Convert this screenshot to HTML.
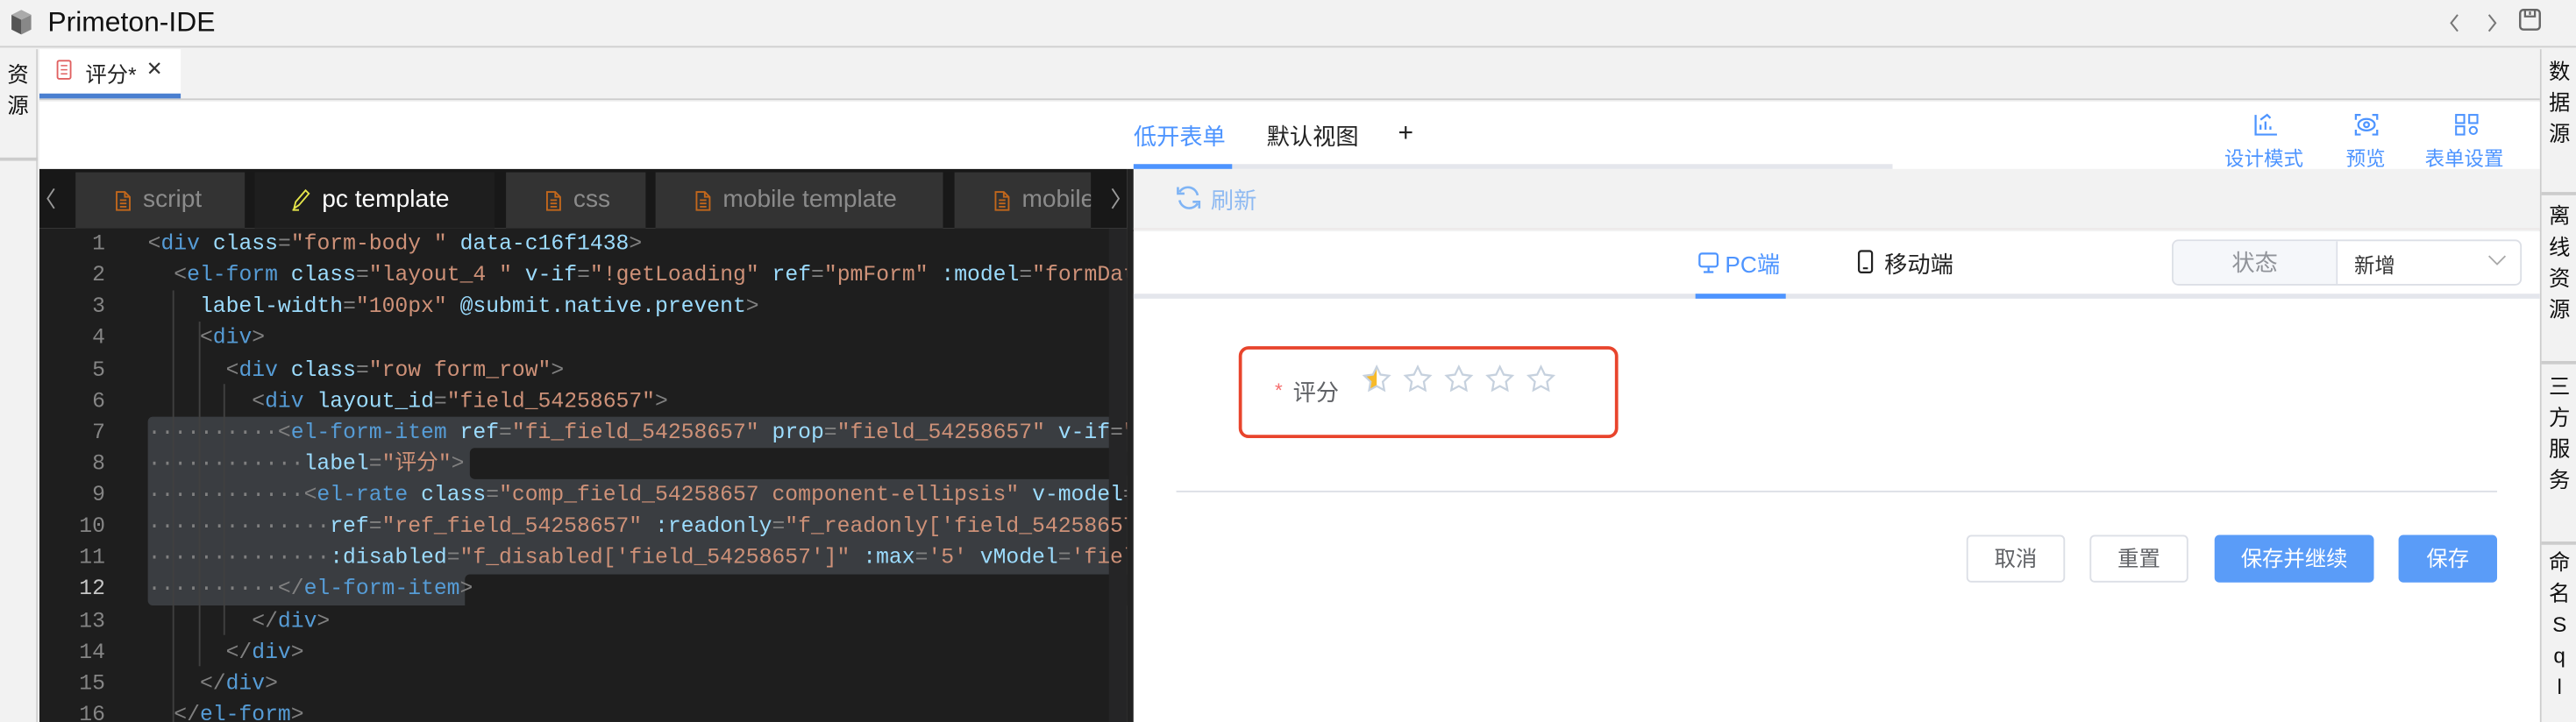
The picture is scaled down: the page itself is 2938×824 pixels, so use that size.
<!DOCTYPE html>
<html><head><meta charset="utf-8"><style>
*{margin:0;padding:0;box-sizing:border-box}
html,body{width:2938px;height:824px;overflow:hidden;background:#f2f2f2}
#w{position:absolute;left:0;top:0;width:1568px;height:440px;transform:scale(1.8737,1.8727);transform-origin:0 0;font-family:"Liberation Sans","Noto Sans CJK SC",sans-serif;color:#222}
.a{position:absolute}
.code{position:absolute;left:24px;top:139px;width:662px;height:301px;background:#1e1e1e;overflow:hidden}
.ln{position:absolute;left:0;width:40px;text-align:right;font-family:"Liberation Mono",monospace;font-size:13.2px;color:#858585;height:19.13px;line-height:19.13px}
.cl{position:absolute;left:66px;white-space:pre;font-family:"Liberation Mono","Noto Sans CJK SC",monospace;font-size:13.2px;height:19.13px;line-height:19.13px;color:#d4d4d4}
.t{color:#569cd6}.p{color:#808080}.at{color:#9cdcfe}.s{color:#ce9178}
.tab{position:absolute;top:105px;height:34px;background:#333;color:#8b8b8b;font-size:15px;line-height:34px;overflow:hidden;white-space:nowrap}
.tab svg{position:absolute;left:24px;top:11px}
.tab span{position:absolute;left:41px;top:0}
.btn{position:absolute;top:326px;height:29px;border-radius:3px;font-size:13px;line-height:27px;text-align:center}
.vs{position:absolute;width:22px;text-align:center;font-size:13px;line-height:19px;color:#111}
</style></head><body><div id="w">
<div class="a" style="left:0;top:0;width:1568px;height:29px;background:#f2f2f2;border-bottom:1.5px solid #cfcfcf"></div>
<svg class="a" style="left:5px;top:5px" width="17" height="17" viewBox="0 0 17 17"><path d="M2 4l6 3v9l-6-3z" fill="#555"/><path d="M8 7l6-3v9l-6 3z" fill="#888"/><path d="M2 4l6-3 6 3-6 3z" fill="#aaa"/></svg>
<div class="a" style="left:29px;top:4px;font-size:17px;color:#111">Primeton-IDE</div>
<svg class="a" style="left:1489px;top:7px" width="10" height="14" viewBox="0 0 10 14"><path d="M7 2L3 7l4 5" fill="none" stroke="#777" stroke-width="1.1"/></svg>
<svg class="a" style="left:1512px;top:7px" width="10" height="14" viewBox="0 0 10 14"><path d="M3 2l4 5-4 5" fill="none" stroke="#777" stroke-width="1.1"/></svg>
<svg class="a" style="left:1533px;top:5px" width="14" height="14" viewBox="0 0 14 14"><rect x="1" y="1" width="12" height="12" rx="2" fill="none" stroke="#666" stroke-width="1.3"/><path d="M4 1v4h6V1M7 2v2" fill="none" stroke="#666" stroke-width="1.2"/></svg>
<div class="a" style="left:0;top:30px;width:23px;height:410px;background:#f2f2f2;border-right:1px solid #d0d0d0"></div>
<div class="vs" style="left:0;top:36px">资<br>源</div>
<div class="a" style="left:0;top:96px;width:23px;height:1.5px;background:#ccc"></div>
<div class="a" style="left:1546px;top:30px;width:22px;height:410px;background:#f2f2f2;border-left:1px solid #ccc"></div>
<div class="vs" style="left:1547px;top:34px">数<br>据<br>源</div>
<div class="a" style="left:1547px;top:117px;width:21px;height:1.5px;background:#ccc"></div>
<div class="vs" style="left:1547px;top:122px">离<br>线<br>资<br>源</div>
<div class="a" style="left:1547px;top:220px;width:21px;height:1.5px;background:#ccc"></div>
<div class="vs" style="left:1547px;top:226px">三<br>方<br>服<br>务</div>
<div class="a" style="left:1547px;top:330px;width:21px;height:1.5px;background:#ccc"></div>
<div class="vs" style="left:1547px;top:333px">命<br>名<br>S<br>q<br>l</div>
<div class="a" style="left:24px;top:30px;width:1522px;height:31px;background:#f2f2f2;border-bottom:1.5px solid #ccc"></div>
<div class="a" style="left:24px;top:30px;width:86px;height:30px;background:#fff;border-bottom:3px solid #4a7fd0"></div>
<svg class="a" style="left:34px;top:36px" width="10" height="13" viewBox="0 0 10 13"><rect x="1" y="1" width="8" height="11" rx="1" fill="none" stroke="#e06060" stroke-width="1"/><path d="M3 4h4M3 6.5h4M3 9h4" stroke="#e06060" stroke-width=".8"/></svg>
<div class="a" style="left:52px;top:35px;font-size:13px;color:#222">评分*</div>
<div class="a" style="left:89px;top:35px;font-size:12px;color:#333">✕</div>
<div class="a" style="left:24px;top:62px;width:1522px;height:41px;background:#fff"></div>
<div class="a" style="left:690px;top:73px;font-size:14px;color:#4d94ff">低开表单</div>
<div class="a" style="left:771px;top:73px;font-size:14px;color:#222">默认视图</div>
<div class="a" style="left:851px;top:73px;font-size:16px;color:#222">+</div>
<div class="a" style="left:690px;top:100px;width:462px;height:3px;background:#e4e6ec"></div>
<div class="a" style="left:690px;top:100px;width:60px;height:3px;background:#4d94ff"></div>
<svg class="a" style="left:1372px;top:69px" width="15" height="14" viewBox="0 0 15 14"><path d="M1 1v12h13M4 10V7M7 10V5M10 10V8M4 4l4-3 2 2" fill="none" stroke="#4d94ff" stroke-width="1.2"/></svg>
<div class="a" style="left:1354px;top:88px;font-size:12px;color:#4d94ff">设计模式</div>
<svg class="a" style="left:1433px;top:69px" width="15" height="14" viewBox="0 0 15 14"><path d="M1 4V1h3M11 1h3v3M14 10v3h-3M4 13H1v-3" fill="none" stroke="#4d94ff" stroke-width="1.2"/><ellipse cx="7.5" cy="7" rx="5" ry="3.5" fill="none" stroke="#4d94ff" stroke-width="1.2"/><circle cx="7.5" cy="7" r="1.5" fill="none" stroke="#4d94ff" stroke-width="1.2"/></svg>
<div class="a" style="left:1428px;top:88px;font-size:12px;color:#4d94ff">预览</div>
<svg class="a" style="left:1494px;top:69px" width="15" height="14" viewBox="0 0 15 14"><rect x="1" y="1" width="5" height="5" fill="none" stroke="#4d94ff" stroke-width="1.1"/><rect x="9" y="1" width="5" height="5" fill="none" stroke="#4d94ff" stroke-width="1.1"/><rect x="1" y="8" width="5" height="5" fill="none" stroke="#4d94ff" stroke-width="1.1"/><circle cx="11.5" cy="10.5" r="2.2" fill="none" stroke="#4d94ff" stroke-width="1.1"/></svg>
<div class="a" style="left:1476px;top:88px;font-size:12px;color:#4d94ff">表单设置</div>
<div class="a" style="left:24px;top:103px;width:662px;height:36px;background:#181818"></div>
<svg class="a" style="left:27px;top:114px" width="8" height="14" viewBox="0 0 8 14"><path d="M6 1L2 7l4 6" fill="none" stroke="#999" stroke-width="1"/></svg>
<svg class="a" style="left:675px;top:114px" width="8" height="14" viewBox="0 0 8 14"><path d="M2 1l4 6-4 6" fill="none" stroke="#999" stroke-width="1"/></svg>
<div class="tab" style="left:46px;width:103px"><svg width="10" height="13" viewBox="0 0 10 13"><path d="M1 1h5l3 3v8H1z M6 1v3h3 M3 6h4M3 8h4M3 10h4" fill="none" stroke="#c2671c" stroke-width="1"/></svg><span>script</span></div>
<div class="tab" style="left:155px;width:146px;background:#1e1e1e;color:#fff"><svg width="12" height="14" viewBox="0 0 12 14" style="left:22px;top:10px"><path d="M2 12l1-4 6-7 2 2-6 7z M1 13h4" fill="none" stroke="#e6e64a" stroke-width="1"/></svg><span>pc template</span></div>
<div class="tab" style="left:308px;width:85px"><svg width="10" height="13" viewBox="0 0 10 13"><path d="M1 1h5l3 3v8H1z M6 1v3h3 M3 6h4M3 8h4M3 10h4" fill="none" stroke="#c2671c" stroke-width="1"/></svg><span>css</span></div>
<div class="tab" style="left:399px;width:175px"><svg width="10" height="13" viewBox="0 0 10 13"><path d="M1 1h5l3 3v8H1z M6 1v3h3 M3 6h4M3 8h4M3 10h4" fill="none" stroke="#c2671c" stroke-width="1"/></svg><span>mobile template</span></div>
<div class="tab" style="left:581px;width:83px"><svg width="10" height="13" viewBox="0 0 10 13"><path d="M1 1h5l3 3v8H1z M6 1v3h3 M3 6h4M3 8h4M3 10h4" fill="none" stroke="#c2671c" stroke-width="1"/></svg><span>mobile</span></div>
<div class="code">
<div class="a" style="left:66px;top:114.8px;width:596px;height:114.8px;background:#3a3d41;border-radius:3px"></div>
<div class="a" style="left:262px;top:133.9px;width:400px;height:19.13px;background:#1e1e1e;border-radius:3px"></div>
<div class="a" style="left:259px;top:210.5px;width:403px;height:19.13px;background:#1e1e1e;border-radius:3px 0 0 0"></div>
<div class="a" style="left:81px;top:38px;width:1px;height:263px;background:#404040"></div>
<div class="a" style="left:97px;top:57px;width:1px;height:210px;background:#404040"></div>
<div class="a" style="left:112px;top:95px;width:1px;height:153px;background:#404040"></div>
<div class="a" style="left:651px;top:0;width:11px;height:301px;background:#252526"></div>
<div class="ln" style="top:0">1</div><div class="ln" style="top:19.13px">2</div><div class="ln" style="top:38.26px">3</div><div class="ln" style="top:57.39px">4</div><div class="ln" style="top:76.52px">5</div><div class="ln" style="top:95.65px">6</div><div class="ln" style="top:114.78px">7</div><div class="ln" style="top:133.91px">8</div><div class="ln" style="top:153.04px">9</div><div class="ln" style="top:172.17px">10</div><div class="ln" style="top:191.3px">11</div><div class="ln" style="top:210.43px;color:#c6c6c6">12</div><div class="ln" style="top:229.56px">13</div><div class="ln" style="top:248.69px">14</div><div class="ln" style="top:267.82px">15</div><div class="ln" style="top:286.95px">16</div>
<div class="cl" style="top:0"><span class="p">&lt;</span><span class="t">div</span> <span class="at">class</span><span class="p">=</span><span class="s">"form-body "</span> <span class="at">data-c16f1438</span><span class="p">&gt;</span></div>
<div class="cl" style="top:19.13px">  <span class="p">&lt;</span><span class="t">el-form</span> <span class="at">class</span><span class="p">=</span><span class="s">"layout_4 "</span> <span class="at">v-if</span><span class="p">=</span><span class="s">"!getLoading"</span> <span class="at">ref</span><span class="p">=</span><span class="s">"pmForm"</span> <span class="at">:model</span><span class="p">=</span><span class="s">"formData"</span></div>
<div class="cl" style="top:38.26px">    <span class="at">label-width</span><span class="p">=</span><span class="s">"100px"</span> <span class="at">@submit.native.prevent</span><span class="p">&gt;</span></div>
<div class="cl" style="top:57.39px">    <span class="p">&lt;</span><span class="t">div</span><span class="p">&gt;</span></div>
<div class="cl" style="top:76.52px">      <span class="p">&lt;</span><span class="t">div</span> <span class="at">class</span><span class="p">=</span><span class="s">"row form_row"</span><span class="p">&gt;</span></div>
<div class="cl" style="top:95.65px">        <span class="p">&lt;</span><span class="t">div</span> <span class="at">layout_id</span><span class="p">=</span><span class="s">"field_54258657"</span><span class="p">&gt;</span></div>
<div class="cl" style="top:114.78px"><span class="p">··········</span><span class="p">&lt;</span><span class="t">el-form-item</span> <span class="at">ref</span><span class="p">=</span><span class="s">"fi_field_54258657"</span> <span class="at">prop</span><span class="p">=</span><span class="s">"field_54258657"</span> <span class="at">v-if</span><span class="p">=</span><span class="s">"f_</span></div>
<div class="cl" style="top:133.91px"><span class="p">············</span><span class="at">label</span><span class="p">=</span><span class="s">"评分"</span><span class="p">&gt;</span></div>
<div class="cl" style="top:153.04px"><span class="p">············</span><span class="p">&lt;</span><span class="t">el-rate</span> <span class="at">class</span><span class="p">=</span><span class="s">"comp_field_54258657 component-ellipsis"</span> <span class="at">v-model</span><span class="p">=</span><span class="s">"</span></div>
<div class="cl" style="top:172.17px"><span class="p">··············</span><span class="at">ref</span><span class="p">=</span><span class="s">"ref_field_54258657"</span> <span class="at">:readonly</span><span class="p">=</span><span class="s">"f_readonly['field_54258657'</span></div>
<div class="cl" style="top:191.3px"><span class="p">··············</span><span class="at">:disabled</span><span class="p">=</span><span class="s">"f_disabled['field_54258657']"</span> <span class="at">:max</span><span class="p">=</span><span class="s">'5'</span> <span class="at">vModel</span><span class="p">=</span><span class="s">'field_</span></div>
<div class="cl" style="top:210.43px"><span class="p">··········</span><span class="p">&lt;/</span><span class="t">el-form-item</span><span class="p">&gt;</span></div>
<div class="cl" style="top:229.56px">        <span class="p">&lt;/</span><span class="t">div</span><span class="p">&gt;</span></div>
<div class="cl" style="top:248.69px">      <span class="p">&lt;/</span><span class="t">div</span><span class="p">&gt;</span></div>
<div class="cl" style="top:267.82px">    <span class="p">&lt;/</span><span class="t">div</span><span class="p">&gt;</span></div>
<div class="cl" style="top:286.95px">  <span class="p">&lt;/</span><span class="t">el-form</span><span class="p">&gt;</span></div>
</div>
<div class="a" style="left:686px;top:103px;width:4px;height:337px;background:#222"></div>
<div class="a" style="left:690px;top:103px;width:856px;height:37px;background:#f2f2f2;border-bottom:1.5px solid #ece8e8"></div>
<svg class="a" style="left:715px;top:112px" width="17" height="17" viewBox="0 0 17 17"><path d="M3 10a6 6 0 0 0 11 2M14 7A6 6 0 0 0 3 5" fill="none" stroke="#7fb4f5" stroke-width="1.4"/><path d="M2 2v4h4M15 15v-4h-4" fill="none" stroke="#7fb4f5" stroke-width="1.4"/></svg>
<div class="a" style="left:737px;top:112px;font-size:14px;color:#8fbaf2">刷新</div>
<div class="a" style="left:690px;top:141px;width:856px;height:299px;background:#fff"></div>
<svg class="a" style="left:1033px;top:153px" width="14" height="14" viewBox="0 0 14 14"><rect x="1.5" y="1.5" width="11" height="8" rx="1.5" fill="none" stroke="#4d94ff" stroke-width="1.2"/><path d="M7 10v2.5M4 12.8h6" stroke="#4d94ff" stroke-width="1.2"/></svg>
<div class="a" style="left:1050px;top:151px;font-size:14px;color:#4d94ff">PC端</div>
<svg class="a" style="left:1130px;top:152px" width="11" height="15" viewBox="0 0 11 15"><rect x="1.5" y="1" width="8" height="13" rx="1.5" fill="none" stroke="#222" stroke-width="1.2"/><path d="M4 11.5h3" stroke="#222" stroke-width="1.2"/></svg>
<div class="a" style="left:1147px;top:151px;font-size:14px;color:#222">移动端</div>
<div class="a" style="left:690px;top:178.5px;width:856px;height:3px;background:#e4e6ec"></div>
<div class="a" style="left:1032px;top:178.5px;width:55px;height:3px;background:#4d94ff"></div>
<div class="a" style="left:1322px;top:146px;width:213px;height:28px;border:1px solid #dcdfe6;border-radius:4px;background:#fff"></div>
<div class="a" style="left:1323px;top:147px;width:100px;height:26px;background:#f5f7fa;border-right:1px solid #dcdfe6;border-radius:3px 0 0 3px;text-align:center;line-height:26px;font-size:14px;color:#909399">状态</div>
<div class="a" style="left:1433px;top:151px;font-size:12.5px;color:#333">新增</div>
<svg class="a" style="left:1514px;top:154px" width="12" height="10" viewBox="0 0 12 10"><path d="M1 2l5 5 5-5" fill="none" stroke="#aaa" stroke-width="1"/></svg>
<div class="a" style="left:754px;top:211px;width:231px;height:56px;border:2.5px solid #e8442c;border-radius:6px"></div>
<div class="a" style="left:776px;top:231px;font-size:12px;color:#f56c6c">*</div>
<div class="a" style="left:787px;top:229px;font-size:14px;color:#606266">评分</div>
<svg class="a" style="left:829px;top:222px" width="125" height="20" viewBox="0 0 125 20">
<defs><path id="st" d="M9 1.5l2.3 4.8 5.2.7-3.8 3.6.9 5.2L9 13.3l-4.6 2.5.9-5.2L1.5 7l5.2-.7z"/><clipPath id="hc"><rect x="0" y="0" width="9" height="20"/></clipPath></defs>
<use href="#st" fill="#f7ba2a" clip-path="url(#hc)"/>
<use href="#st" fill="none" stroke="#c6d1de" stroke-width="1.2"/>
<use href="#st" x="25" fill="none" stroke="#c6d1de" stroke-width="1.2"/>
<use href="#st" x="50" fill="none" stroke="#c6d1de" stroke-width="1.2"/>
<use href="#st" x="75" fill="none" stroke="#c6d1de" stroke-width="1.2"/>
<use href="#st" x="100" fill="none" stroke="#c6d1de" stroke-width="1.2"/>
</svg>
<div class="a" style="left:716px;top:298.5px;width:804px;height:1.5px;background:#dcdfe6"></div>
<div class="btn" style="left:1197px;width:60px;border:1px solid #dcdfe6;color:#606266;background:#fff">取消</div>
<div class="btn" style="left:1272px;width:60px;border:1px solid #dcdfe6;color:#606266;background:#fff">重置</div>
<div class="btn" style="left:1348px;width:97px;background:#5a9cf8;color:#fff;line-height:29px">保存并继续</div>
<div class="btn" style="left:1460px;width:60px;background:#5a9cf8;color:#fff;line-height:29px">保存</div>
</div></body></html>
